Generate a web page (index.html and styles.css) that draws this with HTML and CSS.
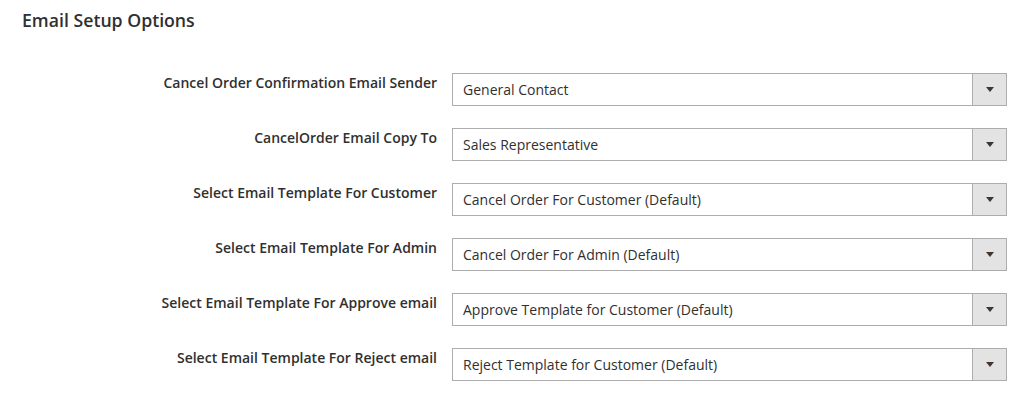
FILE: index.html
```html
<!DOCTYPE html>
<html lang="en">
<head>
  <meta charset="UTF-8">
  <title>Email Setup Options</title>
  <link rel="stylesheet" href="styles.css">
</head>
<body>

  <div class="secao">
    <h2 class="titulo">Email Setup Options</h2>

    <div class="formulario">
      <label class="rotulo" for="f1">Cancel Order Confirmation Email Sender</label>
      <div class="campo">
        <select id="f1"><option>General Contact</option></select>
        <span class="seta"></span>
      </div>

      <label class="rotulo" for="f2">CancelOrder Email Copy To</label>
      <div class="campo">
        <select id="f2"><option>Sales Representative</option></select>
        <span class="seta"></span>
      </div>

      <label class="rotulo" for="f3">Select Email Template For Customer</label>
      <div class="campo">
        <select id="f3"><option>Cancel Order For Customer (Default)</option></select>
        <span class="seta"></span>
      </div>

      <label class="rotulo" for="f4">Select Email Template For Admin</label>
      <div class="campo">
        <select id="f4"><option>Cancel Order For Admin (Default)</option></select>
        <span class="seta"></span>
      </div>

      <label class="rotulo" for="f5">Select Email Template For Approve email</label>
      <div class="campo">
        <select id="f5"><option>Approve Template for Customer (Default)</option></select>
        <span class="seta"></span>
      </div>

      <label class="rotulo" for="f6">Select Email Template For Reject email</label>
      <div class="campo">
        <select id="f6"><option>Reject Template for Customer (Default)</option></select>
        <span class="seta"></span>
      </div>
    </div>
  </div>

</body>
</html>
```

FILE: styles.css
```css
body {
  font-family: "Open Sans", "Liberation Sans", sans-serif;
  background: #fff;
  color: #303030;
  margin: 0;
}

.secao {
  padding-top: 9px;
}

.titulo {
  font-size: 17.7px;
  font-weight: 600;
  line-height: 23px;
  color: #303030;
  margin: 0 0 41px 22px;
}

.formulario {
  display: grid;
  grid-template-columns: 437px 555px;
  column-gap: 15px;
  row-gap: 22px;
}

.rotulo {
  text-align: right;
  font-size: 14px;
  font-weight: 600;
  line-height: 1.4;
  color: #303030;
}

.campo {
  display: flex;
  height: 33px;
  box-sizing: border-box;
  border: 1px solid #adadad;
  background: #fff;
}

.campo select {
  flex: 1;
  appearance: none;
  -webkit-appearance: none;
  border: none;
  background: transparent;
  font-family: inherit;
  font-size: 14px;
  color: #303030;
  padding: 0 10px;
  margin: 0;
  outline: none;
}

.seta {
  width: 33px;
  border-left: 1px solid #adadad;
  background: #e3e3e3;
  display: flex;
  align-items: center;
  justify-content: center;
}

.seta::before {
  content: "";
  border-left: 4px solid transparent;
  border-right: 4px solid transparent;
  border-top: 5px solid #41362f;
}
```
